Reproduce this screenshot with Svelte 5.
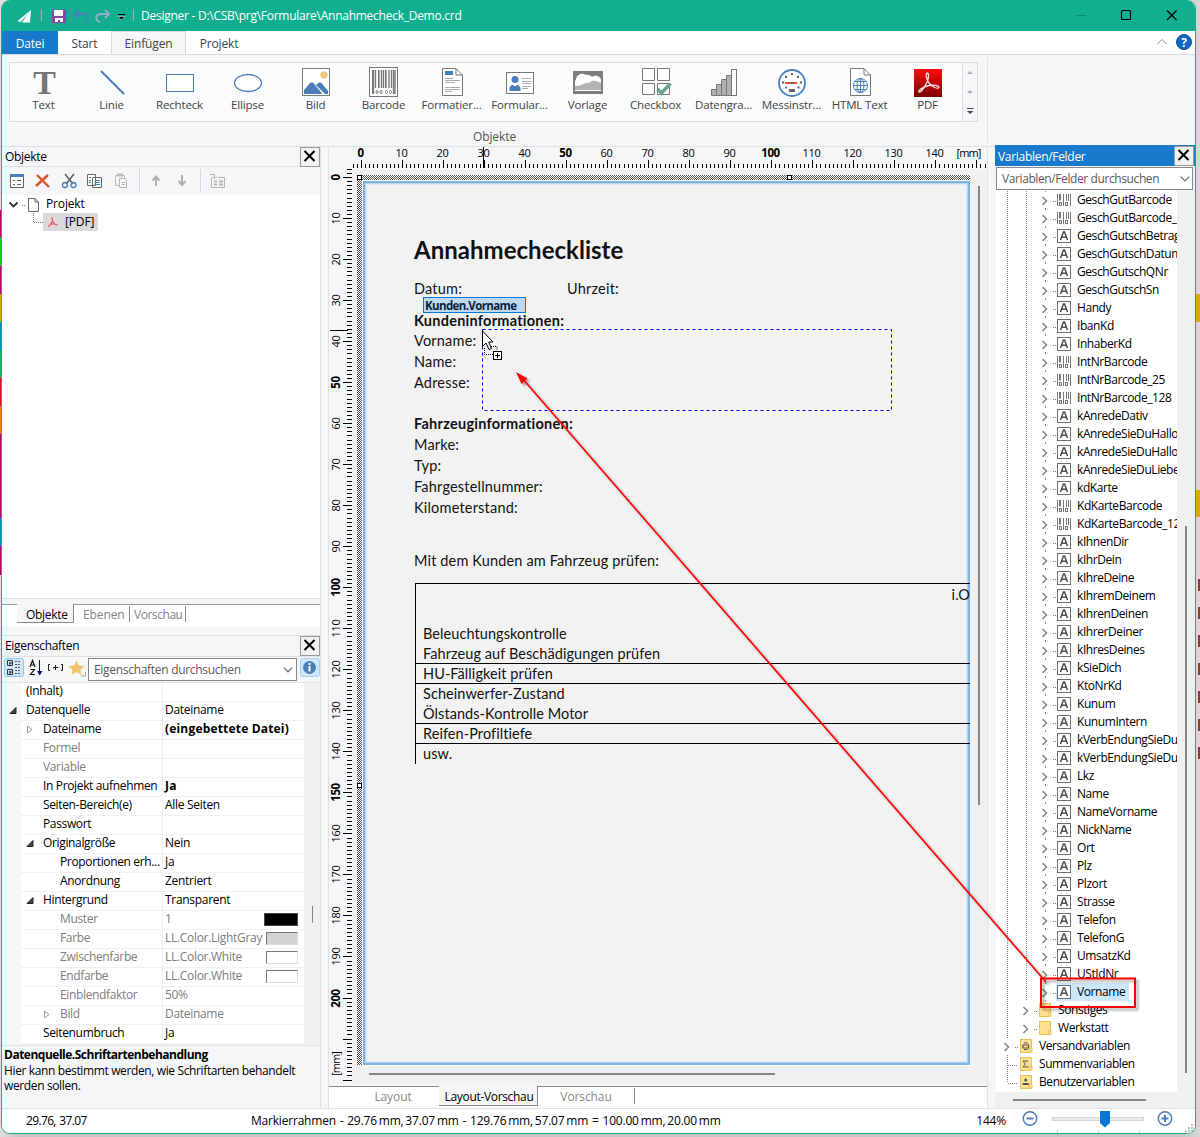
<script lang="ts">
  interface Prop {
    name: string
    value?: string
    level: number
    state?: 'open' | 'closed'
    dim?: boolean
    bold?: boolean
    swatch?: string
  }

  const MM = 4.1025

  const tools = [
    'Text',
    'Linie',
    'Rechteck',
    'Ellipse',
    'Bild',
    'Barcode',
    'Formatier...',
    'Formular...',
    'Vorlage',
    'Checkbox',
    'Datengra...',
    'Messinstr...',
    'HTML Text',
    'PDF',
  ]

  const props: Prop[] = [
    { name: '(Inhalt)', level: 0 },
    { name: 'Datenquelle', value: 'Dateiname', level: 0, state: 'open' },
    { name: 'Dateiname', value: '(eingebettete Datei)', level: 1, state: 'closed', bold: true },
    { name: 'Formel', level: 1, dim: true },
    { name: 'Variable', level: 1, dim: true },
    { name: 'In Projekt aufnehmen', value: 'Ja', level: 1, bold: true },
    { name: 'Seiten-Bereich(e)', value: 'Alle Seiten', level: 1 },
    { name: 'Passwort', level: 1 },
    { name: 'Originalgröße', value: 'Nein', level: 1, state: 'open' },
    { name: 'Proportionen erh...', value: 'Ja', level: 2 },
    { name: 'Anordnung', value: 'Zentriert', level: 2 },
    { name: 'Hintergrund', value: 'Transparent', level: 1, state: 'open' },
    { name: 'Muster', value: '1', level: 2, dim: true, swatch: '#000' },
    { name: 'Farbe', value: 'LL.Color.LightGray', level: 2, dim: true, swatch: '#d3d3d3' },
    { name: 'Zwischenfarbe', value: 'LL.Color.White', level: 2, dim: true, swatch: '#fff' },
    { name: 'Endfarbe', value: 'LL.Color.White', level: 2, dim: true, swatch: '#fff' },
    { name: 'Einblendfaktor', value: '50%', level: 2, dim: true },
    { name: 'Bild', value: 'Dateiname', level: 2, state: 'closed', dim: true },
    { name: 'Seitenumbruch', value: 'Ja', level: 1 },
  ]

  const fields = [
    'GeschGutBarcode',
    'GeschGutBarcode_',
    'GeschGutschBetrag',
    'GeschGutschDatum',
    'GeschGutschQNr',
    'GeschGutschSn',
    'Handy',
    'IbanKd',
    'InhaberKd',
    'IntNrBarcode',
    'IntNrBarcode_25',
    'IntNrBarcode_128',
    'kAnredeDativ',
    'kAnredeSieDuHallo',
    'kAnredeSieDuHallo',
    'kAnredeSieDuLiebe',
    'kdKarte',
    'KdKarteBarcode',
    'KdKarteBarcode_12',
    'kIhnenDir',
    'kIhrDein',
    'kIhreDeine',
    'kIhremDeinem',
    'kIhrenDeinen',
    'kIhrerDeiner',
    'kIhresDeines',
    'kSieDich',
    'KtoNrKd',
    'Kunum',
    'KunumIntern',
    'kVerbEndungSieDu',
    'kVerbEndungSieDu',
    'Lkz',
    'Name',
    'NameVorname',
    'NickName',
    'Ort',
    'Plz',
    'Plzort',
    'Strasse',
    'Telefon',
    'TelefonG',
    'UmsatzKd',
    'UStIdNr',
    'Vorname',
  ]

  const rows = [
    { text: 'Beleuchtungskontrolle' },
    { text: 'Fahrzeug auf Beschädigungen prüfen', line: true },
    { text: 'HU-Fälligkeit prüfen', line: true },
    { text: 'Scheinwerfer-Zustand' },
    { text: 'Ölstands-Kontrolle Motor', line: true },
    { text: 'Reifen-Profiltiefe', line: true },
    { text: 'usw.' },
  ]

  const hTicks = Array.from({ length: 155 }, (_, i) => i - 2)
  const vTicks = Array.from({ length: 223 }, (_, i) => i - 2)

  const hx = (mm: number) => Math.round(9 + mm * MM) + 0.5
  const vy = (mm: number) => Math.round(31 + mm * MM) + 0.5
</script>

{#snippet toolIcon(name: string)}
  <svg width="32" height="32" viewBox="0 0 32 32" fill="none">
    {#if name === 'Text'}
      <text x="16.500" y="28" class="t-glyph" text-anchor="middle" fill="#757575">T</text>
    {:else if name === 'Linie'}
      <path d="M5 5L28 28" stroke="#4a7ebb" stroke-width="2" />
    {:else if name === 'Rechteck'}
      <rect x="2.5" y="8.5" width="27" height="17" stroke="#4a7ebb" fill="#fff" />
    {:else if name === 'Ellipse'}
      <ellipse cx="16" cy="17" rx="13.5" ry="8.5" stroke="#4a7ebb" stroke-width="1.3" fill="#fff" />
    {:else if name === 'Bild'}
      <rect x="2.5" y="2.5" width="27" height="27" stroke="#7a7a7a" fill="#fff" />
      <circle cx="24" cy="9" r="3.7" fill="#efc87c" />
      <path d="M4 28V24L10.500 16.500L13 16.500L22.500 28ZM16 19L19 16.500H21L28 25V28H25Z" fill="#4a7ebb" />
    {:else if name === 'Barcode'}
      <rect x="1.5" y="1.5" width="28" height="29" stroke="#777" fill="#fff" />
      <path
        d="M5.500 4V28M7.500 4V22M11 4V22M13.500 4V22M15.500 4V22M18 4V22M21 4V22M23.500 4V22M25.500 4V28M27 4V28"
        stroke="#777"
        stroke-width="1.3"
      />
      <path d="M4.500 4V28M10.500 4V22M17.500 4V22" stroke="#777" />
      <rect x="8" y="24.500" width="2" height="3" rx="1" stroke="#777" />
      <rect x="12" y="24.500" width="2" height="3" rx="1" stroke="#777" />
      <rect x="17.500" y="24.500" width="2" height="3" rx="1" stroke="#777" />
      <rect x="21.500" y="24.500" width="2" height="3" rx="1" stroke="#777" />
    {:else if name === 'Formatier...'}
      <path d="M6.500 2.500H20L26.500 9V29.500H6.500Z" stroke="#777" fill="#fff" />
      <path d="M20 2.500V9H26.500" stroke="#777" />
      <rect x="9" y="5" width="8" height="4" fill="#4a7ebb" />
      <path d="M9 12.500H17M9 14.500H24M9 16.500H19M9 21.500H24M9 23.500H24M9 25.500H16" stroke="#aaa" />
    {:else if name === 'Formular...'}
      <rect x="2.500" y="6.500" width="27" height="21" stroke="#777" fill="#fff" />
      <circle cx="11" cy="13.500" r="3.500" fill="#4a7ebb" />
      <path d="M5.500 25V21.500L8 18.500L11 20.500L14 18.500L16.500 21.500V25Z" fill="#4a7ebb" />
      <path d="M18 12.500H27M18 15.500H27M18 17.500H27M18 20.500H27M18 22.500H24" stroke="#aaa" />
    {:else if name === 'Vorlage'}
      <rect x="1" y="5" width="30" height="23" fill="#7d7d7d" />
      <path d="M3 20V15C5 13 4 9 7 9C9 7 12 8 14 9C18 8 19 12 22 10C26 9 29 12 29 14V20Z" fill="#fff" />
      <path d="M3 20C9 21 12 16 17 17C20 13 25 15 29 17V24H3Z" fill="#b4b4b4" />
      <path d="M3 24.500H29" stroke="#fff" />
    {:else if name === 'Checkbox'}
      <path
        d="M2.500 2.500H14.500V14.500H2.500ZM17.500 2.500H29.500V14.500H17.500ZM2.500 17.500H14.500V28.500H2.500ZM17.500 17.500H29.500V28.500H17.500Z"
        stroke="#777"
        fill="#fff"
      />
      <path d="M17.500 23L21.500 27L30.500 17.500" stroke="#65a790" stroke-width="3.600" />
    {:else if name === 'Datengra...'}
      <path
        d="M3.500 23.500H8.500V29.500H3.500ZM8.500 18.500H13.500V29.500H8.500ZM13.500 13.500H18.500V29.500H13.500ZM18.500 9.500H23.500V29.500H18.500Z"
        fill="#b0b0b0"
        stroke="#777"
      />
      <rect x="23.500" y="3.500" width="5" height="26" stroke="#777" fill="#fff" />
    {:else if name === 'Messinstr...'}
      <circle cx="16" cy="17" r="13" stroke="#4a7ebb" stroke-width="1.800" fill="#fff" />
      <path
        d="M6 16.500H8M24 16.500H26M16 7V9M10 10V12M22 10V12M9 21.500H11M21.500 21.500H23.500"
        stroke="#666"
        stroke-width="2"
      />
      <path d="M9 17H21" stroke="#d9502e" stroke-width="2" />
      <rect x="15" y="16" width="2" height="2" fill="#666" />
      <rect x="13" y="23" width="6" height="3" fill="#666" />
    {:else if name === 'HTML Text'}
      <path d="M6.500 2.500H20L26.500 9V29.500H6.500Z" stroke="#777" fill="#fff" />
      <path d="M20 2.500V9H26.500" stroke="#777" />
      <circle cx="16.500" cy="19.500" r="7" stroke="#4a7ebb" />
      <ellipse cx="16.500" cy="19.500" rx="3.500" ry="7" stroke="#4a7ebb" />
      <path d="M16.500 12.500V26.500M9.500 19.500H23.500M10.500 15.500H22.500M10.500 23.500H22.500" stroke="#4a7ebb" />
    {:else}
      <defs>
        <linearGradient id="pdf" x1="0" y1="0" x2="0" y2="1">
          <stop offset="0" stop-color="#fb0d0d" />
          <stop offset="1" stop-color="#7c0000" />
        </linearGradient>
      </defs>
      <rect x="2" y="3" width="28" height="28" fill="url(#pdf)" />
      <path
        d="M15 7C17 7 17 11 15.500 15C13 21 9 26 7.500 26C5 26 9 21 17 19.500C22 18.500 27 19.500 27 21.500C26 23.500 20 21 17 17C15 14 13 8 15 7Z"
        stroke="#f8e0e0"
        stroke-width="1.300"
      />
    {/if}
  </svg>
{/snippet}

{#snippet fieldIcon(barcode: boolean)}
  {#if barcode}
    <svg class="ficon" width="14" height="14" viewBox="0 0 14 14" fill="none" stroke="#777">
      <path d="M.5 1V13M3 1V8M6.500 1V13M9.500 1V8M11.500 1V8M13.500 1V13" />
      <path d="M3 1V7" stroke-width="2" />
      <rect x="2.500" y="9.500" width="2" height="3" />
      <rect x="8.500" y="9.500" width="2" height="3" />
    </svg>
  {:else}
    <svg class="ficon" width="14" height="14" viewBox="0 0 14 14" fill="none">
      <rect x=".5" y=".5" width="13" height="13" fill="#fff" stroke="#707070" />
      <path d="M3.500 11L6.500 3H7.500L10.500 11M4.500 8.300H9.500" stroke="#505050" stroke-width="1.500" />
    </svg>
  {/if}
{/snippet}

{#snippet close()}
  <svg class="close" width="20" height="20" viewBox="0 0 20 20">
    <rect x=".5" y=".5" width="19" height="19" fill="#f2f2f2" stroke="#999" />
    <path d="M4.500 4L14.500 14M14.500 4L4.500 14" stroke="#000" stroke-width="2" />
  </svg>
{/snippet}

{#snippet chevron()}
  <svg class="chev" width="10" height="6" viewBox="0 0 10 6" fill="none">
    <path d="M.7.7L5 5L9.300.7" stroke="#666" stroke-width="1.100" />
  </svg>
{/snippet}

{#snippet folder(kind: string)}
  <svg class="folder" width="13" height="14" viewBox="0 0 13 14" fill="none">
    <rect x=".5" y=".5" width="11" height="13" fill="#fce18e" stroke="#e8c35a" />
    <path d="M9.500 13.500V9H12V13.500" fill="#fce18e" stroke="#e8c35a" />
    {#if kind === 'print'}
      <path d="M3 6H8.500V9H3ZM4 4H7.500M4 10.500H7.500" stroke="#555" stroke-width="1.200" />
    {:else if kind === 'sum'}
      <path d="M8 4.500V4H3L5.500 7L3 10H8V9.500" stroke="#555" />
    {:else if kind === 'user'}
      <circle cx="5.700" cy="5" r="1.500" fill="#555" />
      <path d="M2.700 10V8H8.700V10Z" fill="#555" />
    {/if}
  </svg>
{/snippet}

<div class="desktop">
  <div class="window">
    <header class="titlebar">
      <svg width="130" height="31" viewBox="0 0 130 31" fill="none">
        <path d="M29 10L15.500 21L18.500 22L25.500 14.500L20 22.500H28Z" fill="#fff" />
        <path d="M38.500 9V21" stroke="#5b9484" />
        <path d="M39.500 9V21" stroke="#6cc9b5" />
        <path d="M50 9.500H64V23H50Z" fill="#8a46a8" />
        <rect x="52" y="10" width="9" height="6" fill="#fff" />
        <path d="M53 18H61V22H58V20H56V22H53Z" fill="#fff" />
        <path d="M77 10L73 14L77 18M73 14H81C87 14 87 21 82 22" stroke="#4a7ec0" stroke-width="2" />
        <path d="M103 10L107 14L103 18M107 14H99C93 14 93 21 98 22" stroke="#94aed0" stroke-width="2" />
        <path d="M116 14.500H123" stroke="#000" />
        <path d="M116 16.500H123L119.500 20Z" fill="#000" stroke="#fff" stroke-width=".5" />
      </svg>
      <i></i>
      <span class="title">Designer - D:\CSB\prg\Formulare\Annahmecheck_Demo.crd</span>
      <svg class="controls" width="120" height="31" viewBox="0 0 120 31" fill="none" stroke="#000">
        <path d="M1 15.500H11" stroke="#0c8c72" />
        <rect x="46.500" y="10.500" width="9" height="9" rx="1" stroke-width="1.200" />
        <path d="M92 10.500L101.500 20M101.500 10.500L92 20" stroke-width="1.200" />
      </svg>
    </header>

    <nav class="menu">
      <span class="file">Datei</span>
      <span class="start">Start</span>
      <span class="insert">Einfügen</span>
      <span class="project">Projekt</span>
      <svg class="help" width="36" height="18" viewBox="0 0 36 18" fill="none">
        <path d="M1.500 11L6 6.500L10.500 11" stroke="#888" />
        <circle cx="28" cy="9" r="7.500" fill="#0a68c8" stroke="#2a4d78" />
        <text x="28" y="13.500" text-anchor="middle" class="q">?</text>
      </svg>
    </nav>

    <section class="ribbon">
      <div class="group">
        <div class="gallery">
          {#each tools as tool}
            <div class="tool">
              {@render toolIcon(tool)}
              <span>{tool}</span>
            </div>
          {/each}
          <svg class="pager" width="14" height="58" viewBox="0 0 14 58">
            <path d="M4 11H10L7 8ZM4 28H10L7 31Z" fill="#a9adb3" />
            <path d="M4 45.500H10.500" stroke="#444b5a" />
            <path d="M4 48H10.500L7.200 51Z" fill="#444b5a" />
          </svg>
        </div>
        <div class="caption">Objekte</div>
      </div>
    </section>

    <main>
      <aside class="left">
        <div class="phead"><span>Objekte</span>{@render close()}</div>
        <svg class="tools" width="318" height="28" viewBox="2 167 318 28" fill="none">
          <rect x="10.500" y="174.500" width="13" height="13" fill="#fff" stroke="#666" />
          <path d="M10 175.500H24" stroke="#4a7ebb" stroke-width="3" />
          <path d="M13 180.500H15M13 184.500H15M17 180.500H21M17 184.500H21" stroke="#666" />
          <path d="M37 175L49 187M48 175L36 186" stroke="#dd5230" stroke-width="2.400" />
          <path d="M65 174L73 184M74 174L66 184" stroke="#666" stroke-width="1.700" />
          <circle cx="65" cy="185" r="2.500" stroke="#4a7ebb" stroke-width="1.300" />
          <circle cx="73.500" cy="185" r="2.500" stroke="#4a7ebb" stroke-width="1.300" />
          <path d="M87.500 174.500H95.500V185.500H87.500ZM92.500 177.500H101.500V187.500H92.500Z" fill="#fff" stroke="#666" />
          <path d="M89 177.500H91M89 180.500H91M89 182.500H91M94.500 180.500H100M94.500 182.500H100M94.500 184.500H100" stroke="#4a7ebb" />
          <path d="M115.500 175.500H124.500V185.500H115.500Z" stroke="#bbb" />
          <path d="M117 175H123" stroke="#bbb" stroke-width="3" />
          <path d="M119.500 178.500H124.500L126.500 181V187.500H119.500ZM121.500 182.500H125M121.500 184.500H125" fill="#fafafa" stroke="#b5b5b5" />
          <path d="M139.500 169V192M200.500 169V192" stroke="#d5d8dc" />
          <path d="M156 186V177M152.500 180.500L156 176.500L159.500 180.500M182 175V184M178.500 181L182 185L185.500 181" stroke="#b0b0b0" stroke-width="2" />
          <path d="M211.500 178V187.500H224.500V177.500H218M210 174.500H214.500V178M212 176.500L214.500 179L217 176.500" stroke="#b5b5b5" />
          <path d="M214 181.500H217M219 181.500H223M214 184.500H217M219 184.500H223" stroke="#b5b5b5" stroke-width="2" />
        </svg>
        <div class="objects">
          <div class="node">
            <svg width="38" height="18" viewBox="0 0 38 18" fill="none">
              <path d="M7.500 7.500L11.500 11.500L15.500 7.500" stroke="#333" stroke-width="1.800" />
              <path d="M20 10.500H24" stroke="#777" stroke-dasharray="1 1" />
              <path d="M26.500 3.500H33L36.500 7V16.500H26.500ZM33 3.500V7H36.500" fill="#fff" stroke="#666" />
            </svg>
            <span>Projekt</span>
          </div>
          <div class="node child">
            <svg width="11" height="18" viewBox="0 0 11 18" fill="none">
              <path d="M.5 0V9.500H11" stroke="#777" stroke-dasharray="1 1" />
            </svg>
            <span class="picked">
              <svg width="12" height="14" viewBox="0 0 12 14" fill="none" stroke="#f05050">
                <path d="M5 2L5.500 6L1.500 12M5.500 6L8 9.500L11 10M3.500 9.500L8 8.500" stroke-width="1.200" />
              </svg>
              [PDF]
            </span>
          </div>
        </div>
        <div class="ltabs">
          <span class="active">Objekte</span>
          <span class="second">Ebenen</span>
          <span class="third">Vorschau</span>
        </div>

        <div class="phead props-head"><span>Eigenschaften</span>{@render close()}</div>
        <div class="ptools">
          <svg width="85" height="25" viewBox="2 657 85 25" fill="none">
            <rect x="4.500" y="658.500" width="19" height="18" rx="2" fill="#cfe6fb" stroke="#8fc4f0" />
            <path d="M7.500 660.500H12.500V665.500H7.500ZM7.500 669.500H12.500V674.500H7.500ZM9 663H12M10 662V665M9 672H12M10 671V674" stroke="#333" />
            <path d="M15 661.500H21M15 664.500H21M15 667.500H21M15 670.500H21M15 673.500H21" stroke="#555" stroke-dasharray="2 1" />
            <path d="M30 667L32.500 660.500L35 667M31 665H34M30.500 669.500H34.500L30.500 674.500H35" stroke="#111" stroke-width="1.200" />
            <path d="M39.500 660V672" stroke="#0a0a90" />
            <path d="M37 671H42.500L39.700 675.500Z" fill="#0a0a90" />
            <path d="M50 664.500H48.500V670.500H50M61 664.500H62.500V670.500H61M53 667.500H58.500M55.500 665V670" stroke="#222" />
            <path d="M76.500 660L79 665.500L84.500 666L80.300 670L81.800 675L76.500 672L71.500 675L72.500 670L68.500 666L74.500 665.500Z" fill="#f0c36c" />
            <path d="M81 676H85.500V672" stroke="#aaa" />
          </svg>
          <div class="combo"><span>Eigenschaften durchsuchen</span>{@render chevron()}</div>
          <svg class="info" width="20" height="20" viewBox="0 0 20 20">
            <rect x=".5" y=".5" width="19" height="18" rx="2" fill="#cfe6fb" stroke="#a7d0f5" />
            <circle cx="9.500" cy="9.500" r="6.500" fill="#4a7ebb" />
            <path d="M9.500 8V13.500M9.500 5V7" stroke="#fff" stroke-width="2" />
          </svg>
        </div>
        <div class="pgrid">
          <div class="plist">
            {#each props as p}
              <div class="prow" class:dim={p.dim}>
                <span class="pname level-{p.level}">
                  {#if p.state}
                    <svg class="tw" width="8" height="9" viewBox="0 0 8 9">
                      {#if p.state === 'open'}
                        <path d="M1 7.500H7V1.500Z" fill="#444" stroke="#222" />
                      {:else}
                        <path d="M1.500 1L6 4.500L1.500 8Z" fill="#fff" stroke="#999" />
                      {/if}
                    </svg>
                  {/if}
                  {p.name}
                </span>
                <span class="pvalue" class:bold={p.bold}>{p.value ?? ''}</span>
                {#if p.swatch}
                  <i class="swatch" class:wide={p.name === 'Muster'} style:background={p.swatch}></i>
                {/if}
              </div>
            {/each}
          </div>
          <div class="pscroll"><i></i></div>
        </div>
        <div class="hint">
          <b>Datenquelle.Schriftartenbehandlung</b>
          <p>Hier kann bestimmt werden, wie Schriftarten behandelt<br />werden sollen.</p>
        </div>
      </aside>

      <section class="editor">
        <div class="work">
          <svg class="rulers" width="658" height="937" viewBox="0 0 658 937">
            <rect x="23" y="23" width="634" height="914" fill="#f0f0f0" />
            <g transform="translate(23 0)" stroke="#000">
              {#each hTicks as t}
                <path d="M{hx(t)} {t % 10 === 0 ? 14 : 18}V22" />
              {/each}
              <path d="M131.500 1V22" />
            </g>
            <g stroke="#000">
              {#each vTicks.filter((t) => vy(t) < 935) as t}
                <path d="M{t % 10 === 0 ? 14 : 18} {vy(t)}H23" />
              {/each}
              <path d="M1 184.500H19" />
            </g>
            {#each [0, 10, 20, 30, 40, 50, 60, 70, 80, 90, 100, 110, 120, 130, 140] as n}
              <text x={hx(n) + 22} y="11" text-anchor="middle" class:major={n % 50 === 0}>{n}</text>
            {/each}
            <text x="639.500" y="11" text-anchor="middle" class="unit">[mm]</text>
            {#each [0, 10, 20, 30, 40, 50, 60, 70, 80, 90, 100, 110, 120, 130, 140, 150, 160, 170, 180, 190, 200] as n}
              <text transform="translate(11 {vy(n)}) rotate(-90)" text-anchor="middle" class:major={n % 50 === 0}>{n}</text>
            {/each}
            <text transform="translate(11 918) rotate(-90)" text-anchor="middle" class="unit">[mm]</text>
            <defs>
              <pattern id="hatch" width="2" height="2" patternUnits="userSpaceOnUse">
                <rect width="2" height="2" fill="#fff" />
                <rect width="1" height="1" fill="#555" />
                <rect x="1" y="1" width="1" height="1" fill="#555" />
              </pattern>
            </defs>
            <path d="M28 29H641V34H33V919H28Z" fill="url(#hatch)" />
            <path d="M33.500 919V34.500H641M34 919.500H641" stroke="#fff" fill="none" />
            <rect x="28.500" y="29.500" width="4" height="4" fill="#fff" stroke="#000" />
            <rect x="458.500" y="29.500" width="4" height="4" fill="#fff" stroke="#000" />
            <rect x="28.500" y="637.500" width="4" height="4" fill="#fff" stroke="#000" />
            <path d="M650 40V659" stroke="#858585" stroke-width="2" />
            <path d="M40 928H446" stroke="#858585" stroke-width="2" />
          </svg>
          <article class="paper">
            <h1>Annahmecheckliste</h1>
            <div class="when"><span>Datum:</span><span>Uhrzeit:</span></div>
            <h2>Kundeninformationen:</h2>
            <p>Vorname:</p>
            <p>Name:</p>
            <p>Adresse:</p>
            <h2 class="car">Fahrzeuginformationen:</h2>
            <p>Marke:</p>
            <p>Typ:</p>
            <p>Fahrgestellnummer:</p>
            <p>Kilometerstand:</p>
            <p class="intro">Mit dem Kunden am Fahrzeug prüfen:</p>
            <div class="check">
              <div class="chead">i.O</div>
              {#each rows as row}
                <div class="crow" class:line={row.line}>{row.text}</div>
              {/each}
            </div>
          </article>
        </div>
        <div class="etabs">
          <span class="layout">Layout</span>
          <span class="active">Layout-Vorschau</span>
          <span class="preview">Vorschau</span>
        </div>
      </section>

      <aside class="right">
        <div class="vhead"><span>Variablen/Felder</span>{@render close()}</div>
        <div class="combo"><span>Variablen/Felder durchsuchen</span>{@render chevron()}</div>
        <div class="vbody">
          <div class="tree">
            {#each fields as f}
              <div class="trow">
                <svg class="guides" width="60" height="18" viewBox="0 0 60 18" fill="none">
                  <path d="M11.500 0V18M30.500 0V18" stroke="#888" stroke-dasharray="1 1" />
                  <path d="M49.500 0V1M49.500 17V18" stroke="#888" />
                  <path d="M46.500 6L50.500 10L46.500 14" stroke="#888" stroke-width="1.600" />
                  <path d="M57 10.500H60" stroke="#777" stroke-dasharray="1 1" />
                </svg>
                <span class="entry" class:hot={f === 'Vorname'}>
                  {@render fieldIcon(f.includes('Barcode'))}
                  <span>{f}</span>
                </span>
              </div>
            {/each}
            {#each ['Sonstiges', 'Werkstatt'] as f}
              <div class="trow">
                <svg class="guides" width="43" height="18" viewBox="0 0 43 18" fill="none">
                  <path d="M11.500 0V18" stroke="#888" stroke-dasharray="1 1" />
                  <path d="M27.500 6L31.500 10L27.500 14" stroke="#888" stroke-width="1.600" />
                  <path d="M38 10.500H42" stroke="#777" stroke-dasharray="1 1" />
                </svg>
                {@render folder('plain')}
                <span class="ftext">{f}</span>
              </div>
            {/each}
            {#each [['Versandvariablen', 'print'], ['Summenvariablen', 'sum'], ['Benutzervariablen', 'user']] as [f, kind]}
              <div class="trow">
                <svg class="guides" width="24" height="18" viewBox="0 0 24 18" fill="none">
                  {#if kind === 'print'}
                    <path d="M11.500 0V1" stroke="#888" />
                    <path d="M8.500 6L12.500 10L8.500 14" stroke="#888" stroke-width="1.600" />
                    <path d="M19 10.500H22" stroke="#777" stroke-dasharray="1 1" />
                  {:else}
                    <path d="M11.500 0V{kind === 'sum' ? 18 : 10}M12 10.500H22" stroke="#888" stroke-dasharray="1 1" />
                  {/if}
                </svg>
                {@render folder(kind)}
                <span class="ftext">{f}</span>
              </div>
            {/each}
          </div>
          <div class="vscroll"><i></i></div>
        </div>
        <div class="hscroll"><i></i></div>
      </aside>
    </main>

    <footer>
      <span class="pos">29.76, 37.07</span>
      <span class="frame">Markierrahmen&nbsp; - &nbsp;29.76 mm, 37.07 mm&nbsp; - &nbsp;129.76 mm, 57.07 mm&nbsp; = &nbsp;100.00 mm, 20.00 mm</span>
      <span class="zoom">144%</span>
      <svg width="183" height="24" viewBox="0 0 183 24" fill="none">
        <circle cx="18" cy="9.500" r="6.700" stroke="#4a7ebb" stroke-width="1.500" />
        <path d="M14.500 9.500H21.500" stroke="#4a7ebb" stroke-width="2" />
        <rect x="40.500" y="8.500" width="91" height="3" fill="#e8eaea" stroke="#d4d6d6" />
        <path d="M88 2H98V14L93 18.500L88 14Z" fill="#0078d7" />
        <path d="M45.500 21V24M86.500 21V24M127.500 21V24" stroke="#ccc" />
        <circle cx="153" cy="9.500" r="6.700" stroke="#4a7ebb" stroke-width="1.500" />
        <path d="M149.500 9.500H156.500M153 6V13" stroke="#4a7ebb" stroke-width="2" />
        <path d="M180 15V24M177 18V24M174 21V24" stroke="#bbb" stroke-width="2" stroke-dasharray="2 1" />
      </svg>
    </footer>
  </div>

  <!-- drag in progress: ghost label, drop frame, pointer and the annotation arrow -->
  <div class="ghost">Kunden.Vorname</div>
  <svg class="overlay" width="1200" height="1137" viewBox="0 0 1200 1137" fill="none">
    <rect x="482.500" y="329.500" width="409" height="81" stroke="#0000e0" stroke-dasharray="3 3" />
    <path d="M482.500 331V346.500L486 343L489 349.500L491.500 348.500L488.700 342H493Z" fill="#fff" stroke="#000" />
    <path d="M484.500 348V354.500H493M491 346.500H497V350" stroke="#000" stroke-dasharray="1 1" />
    <rect x="493.500" y="351.500" width="8" height="8" fill="#fff" stroke="#000" />
    <path d="M495 355.500H500M497.500 353V358" stroke="#000" />
    <g filter="url(#drop)">
      <path d="M1046 982L522 378" stroke="#f00" stroke-width="1.600" />
      <path d="M516 372L527.500 378.500L521.500 384Z" fill="#f00" />
      <rect x="1041" y="978.500" width="94" height="28.500" stroke="#f00" stroke-width="2" />
    </g>
    <defs>
      <filter id="drop" filterUnits="userSpaceOnUse" x="500" y="360" width="660" height="660">
        <feDropShadow dx="2.500" dy="2.500" stdDeviation="1.200" flood-color="#000" flood-opacity=".35" />
      </filter>
    </defs>
  </svg>
</div>

<style>
  :global(body) {
    margin: 0;
    overflow: hidden;
  }

  .desktop {
    position: relative;
    width: 1200px;
    height: 1137px;
    background:
      linear-gradient(#b5006a, #b5006a) 0 210px / 2px 27px no-repeat,
      linear-gradient(#10d020, #10d020) 0 237px / 2px 29px no-repeat,
      linear-gradient(#b5006a, #b5006a) 0 266px / 2px 28px no-repeat,
      linear-gradient(#c8b400, #c8b400) 0 294px / 2px 28px no-repeat,
      linear-gradient(#0a84d0, #0a84d0) 0 322px / 2px 28px no-repeat,
      linear-gradient(#20b040, #20b040) 0 350px / 2px 28px no-repeat,
      linear-gradient(#e01010, #e01010) 0 378px / 2px 28px no-repeat,
      linear-gradient(#e88020, #e88020) 0 406px / 2px 28px no-repeat,
      linear-gradient(#0a84d0, #0a84d0) 0 518px / 2px 28px no-repeat,
      linear-gradient(#b5006a, #b5006a) 0 434px / 2px 141px no-repeat,
      linear-gradient(#c8b400, #c8b400) 1196px 294px / 4px 28px no-repeat,
      linear-gradient(#c8b400, #c8b400) 1196px 490px / 4px 27px no-repeat,
      linear-gradient(#7a4a20, #7a4a20) 1198px 579px / 2px 12px no-repeat,
      linear-gradient(#7a4a20, #7a4a20) 1198px 607px / 2px 12px no-repeat,
      linear-gradient(#7a4a20, #7a4a20) 1198px 635px / 2px 12px no-repeat,
      linear-gradient(#7a4a20, #7a4a20) 1198px 663px / 2px 12px no-repeat,
      linear-gradient(#7a4a20, #7a4a20) 1198px 691px / 2px 12px no-repeat,
      linear-gradient(#7a4a20, #7a4a20) 1198px 719px / 2px 12px no-repeat,
      linear-gradient(#7a4a20, #7a4a20) 1198px 747px / 2px 12px no-repeat,
      linear-gradient(90deg, #e0e0e0, #c4c4c4 20px, #c4c4c4 1180px, #d8d8d8);
    font: 12px/18px 'Open Sans', sans-serif;
    letter-spacing: -0.3px;
    color: #000;
  }

  .window {
    box-sizing: border-box;
    width: 1195px;
    height: 1134px;
    margin-left: 1px;
    border: 1px solid #20a78c;
    border-top: 0;
    border-radius: 9px;
    overflow: hidden;
    background: #f5f6f8;
    display: flex;
    flex-direction: column;
    position: absolute;
  }

  svg {
    display: block;
    flex-shrink: 0;
  }

  span {
    white-space: nowrap;
  }

  .titlebar {
    height: 31px;
    flex-shrink: 0;
    background: #11af8f;
    display: flex;
    align-items: center;
    color: #fff;
  }
  .titlebar i {
    width: 1px;
    height: 12px;
    margin: 0 0 1px 0;
    background: #5b9484;
    border-right: 1px solid #6cc9b5;
  }
  .title {
    margin-left: 7px;
    letter-spacing: -0.26px;
  }
  .controls {
    margin-left: auto;
  }

  .menu {
    height: 24px;
    flex-shrink: 0;
    box-sizing: border-box;
    background: #fff;
    border-bottom: 1px solid #d9dbde;
    display: flex;
    color: #444;
    line-height: 25px;
    text-align: center;
    letter-spacing: -0.15px;
  }
  .file {
    width: 56px;
    height: 23px;
    background: #1979ca;
    color: #fff;
  }
  .start {
    width: 53px;
  }
  .insert {
    width: 73px;
    background: #f5f6f8;
    border: 1px solid #d9dbde;
    border-width: 1px 1px 0;
    line-height: 23px;
  }
  .project {
    width: 66px;
  }
  .help {
    margin: 2px 3px 0 auto;
  }
  .q {
    font: bold 12px 'Open Sans', sans-serif;
    fill: #fff;
  }

  .ribbon {
    height: 92px;
    flex-shrink: 0;
    border-bottom: 1px solid #dfe1e4;
    box-sizing: border-box;
  }
  .group {
    width: 986px;
    height: 86px;
    margin-top: 2px;
    border-right: 1px solid #dfe1e4;
    padding: 5px 0 0 7px;
    box-sizing: border-box;
  }
  .gallery {
    width: 967px;
    height: 58px;
    border: 1px solid #d9dbde;
    background: #fafbfd;
    display: flex;
  }
  .tool {
    width: 68px;
    padding-top: 3px;
    display: flex;
    flex-direction: column;
    align-items: center;
    color: #444;
    letter-spacing: -0.15px;
    line-height: 14px;
    font-size: 11.5px;
  }
  .tool span {
    margin-right: 1px;
  }
  .pager {
    border-left: 1px solid #d9dbde;
    background: #f5f6f8;
  }
  .t-glyph {
    font: bold 34px 'Liberation Serif', serif;
  }
  .caption {
    width: 971px;
    margin-top: 7px;
    text-align: center;
    line-height: 16px;
    color: #555;
    letter-spacing: -0.1px;
  }

  main {
    display: flex;
    flex-shrink: 0;
    height: 961px;
    border-bottom: 1px solid #dfe1e4;
  }

  .left {
    width: 318px;
    border-right: 1px solid #dcdee1;
  }
  .phead {
    height: 19px;
    border-bottom: 1px solid #dfe1e4;
    display: flex;
    justify-content: space-between;
    line-height: 20px;
    padding-left: 3px;
  }
  .objects {
    height: 404px;
    background: #fff;
    border-bottom: 1px solid #dfe1e4;
    box-sizing: border-box;
  }
  .node {
    display: flex;
    height: 18px;
    line-height: 18px;
    letter-spacing: -0.15px;
  }
  .node > span {
    margin-left: 6px;
  }
  .child {
    padding-left: 31px;
  }
  .child > .picked {
    display: flex;
    align-items: center;
    gap: 6px;
    margin-left: -1px;
    padding: 0 4px;
    background: #dadada;
  }
  .ltabs {
    margin-top: 5px;
    height: 22px;
    background: #fff;
    border-top: 1px solid #999;
    display: flex;
    color: #848484;
  }
  .ltabs span {
    box-sizing: border-box;
    height: 16px;
    margin-top: 1px;
    padding: 0 3px 0 4px;
    border-right: 1px solid #888;
    line-height: 18px;
  }
  .ltabs .second {
    width: 56px;
    padding: 0 0 0 9px;
    letter-spacing: -0.1px;
  }
  .ltabs .third {
    width: 56px;
    letter-spacing: -0.45px;
  }
  .ltabs .active {
    width: 57px;
    height: 19px;
    margin: -1px 0 0 15px;
    padding: 0 0 0 9px;
    background: #f5f6f8;
    border-bottom: 1px solid #888;
    line-height: 21px;
    color: #000;
  }
  .props-head {
    margin-top: 8px;
    border-top: 1px solid #dfe1e4;
    height: 20px;
  }
  .ptools {
    height: 25px;
    border-bottom: 1px solid #e3e5e8;
    display: flex;
  }
  .combo {
    box-sizing: border-box;
    height: 24px;
    border: 1px solid #888;
    background: #fff;
    display: flex;
    align-items: center;
    justify-content: space-between;
    padding: 0 3px 0 5px;
    color: #5a5a5a;
  }
  .ptools .combo {
    width: 209px;
    height: 23px;
    margin: 1px 0 0 1px;
  }
  .info {
    margin: 1px 0 0 3px;
  }
  .pgrid {
    display: flex;
    height: 361px;
  }
  .plist {
    width: 302px;
    background: #fff;
  }
  .prow {
    height: 19px;
    display: flex;
    align-items: center;
    background: linear-gradient(#f0f1f3, #f0f1f3) 0 100% / 100% 1px no-repeat;
    line-height: 16px;
  }
  .prow.dim {
    color: #7c7c7c;
  }
  .pname {
    box-sizing: border-box;
    width: 161px;
    height: 19px;
    overflow: hidden;
    border-right: 1px solid #eceef0;
    background: linear-gradient(#f5f6f8, #f5f6f8) 0 0 / 19px 100% no-repeat;
    padding-left: 24px;
    position: relative;
    letter-spacing: -0.35px;
  }
  .tw {
    position: absolute;
    left: 7px;
    top: 4px;
  }
  .level-1 {
    padding-left: 41px;
  }
  .level-1 .tw {
    left: 24px;
  }
  .level-2 {
    padding-left: 58px;
  }
  .level-2 .tw {
    left: 41px;
  }
  .pvalue {
    align-self: flex-start;
    padding-left: 2px;
    flex: 1;
  }
  .bold {
    font-weight: bold;
    letter-spacing: 0.18px;
  }
  .swatch {
    box-sizing: border-box;
    width: 32px;
    height: 13px;
    margin-right: 6px;
    margin-bottom: 2px;
    border: 1px solid #ddd;
    border-top-color: #777;
    border-left-color: #777;
  }
  .swatch.wide {
    width: 34px;
    border-color: #444;
  }
  .pscroll {
    flex: 1;
    background: #f0f0f0;
  }
  .pscroll i {
    display: block;
    width: 1px;
    height: 17px;
    margin: 223px 0 0 8px;
    background: #858585;
  }
  .hint {
    border-top: 1px solid #dfe1e4;
    padding: 1px 2px;
    line-height: 15px;
    margin-top: 1px;
  }
  .hint b {
    display: block;
    line-height: 16px;
    letter-spacing: -0.5px;
  }
  .hint p {
    margin: 0;
    white-space: nowrap;
    letter-spacing: -0.37px;
  }

  .editor {
    width: 658px;
    margin-left: 7px;
    border: 1px solid #dfe1e4;
    border-width: 0 1px;
    margin-top: 0;
  }
  .work {
    position: relative;
    height: 936px;
    padding: 34px 0 0 34px;
    box-sizing: border-box;
  }
  .rulers {
    position: absolute;
    left: 0;
    top: -1px;
  }
  .rulers text {
    font-size: 11px;
    letter-spacing: -0.35px;
  }
  .rulers text.major {
    font-weight: bold;
    font-size: 11.5px;
  }
  .rulers text.unit {
    letter-spacing: -0.9px;
  }
  .paper {
    position: relative;
    box-sizing: border-box;
    width: 607px;
    height: 884px;
    background: #f2f2f2;
    box-shadow:
      inset 0 0 0 2px #7db5e6,
      inset 0 0 0 3px #b3d3ef,
      inset 0 0 0 4px #dbe8f4;
    padding: 53px 0 0 51px;
    font: 14.5px/21px 'Lato', sans-serif;
    letter-spacing: 0.2px;
    color: #111;
  }
  .paper h1 {
    margin: 0;
    font-size: 24px;
    line-height: 32px;
    letter-spacing: 0.02px;
  }
  .paper h2 {
    margin: 11px 0 0;
    font-size: 14.5px;
    line-height: 21px;
    letter-spacing: 0.25px;
  }
  .paper p {
    margin: 0;
    line-height: 20.8px;
  }
  .paper h2.car {
    margin: 20px 0 1px;
  }
  .paper .intro {
    margin-top: 32px;
    letter-spacing: 0.15px;
  }
  .when {
    margin-top: 12px;
    display: flex;
  }
  .when span:first-child {
    width: 153px;
  }
  .check {
    margin: 12px 0 0 1px;
    border: 1px solid #000;
    border-width: 1px 0 0 1px;
    line-height: 19px;
    letter-spacing: 0.07px;
  }
  .chead {
    height: 39px;
    padding-top: 1px;
    text-align: right;
  }
  .crow {
    box-sizing: border-box;
    height: 20px;
    padding-left: 7px;
    border-bottom: 1px solid transparent;
  }
  .crow.line {
    border-bottom-color: #000;
  }

  .etabs {
    height: 21px;
    margin-top: 3px;
    background: #fff;
    border-top: 1px solid #888;
    display: flex;
    color: #888;
    text-align: center;
    line-height: 19px;
    letter-spacing: -0.1px;
  }
  .etabs .layout {
    width: 110px;
    text-indent: 18px;
  }
  .etabs .active {
    width: 98px;
    height: 19px;
    margin-top: -1px;
    background: #f5f6f8;
    border: 1px solid #888;
    border-width: 0 1px 1px 0;
    line-height: 21px;
    text-indent: 2px;
    letter-spacing: -0.33px;
    color: #000;
  }
  .etabs .preview {
    width: 96px;
    height: 16px;
    margin-top: 1px;
    border-right: 1px solid #888;
    line-height: 17px;
  }

  .right {
    width: 200px;
    margin-left: 7px;
    display: flex;
    flex-direction: column;
  }
  .vhead {
    height: 21px;
    margin-top: -2px;
    background: #1979ca;
    color: #fff;
    display: flex;
    justify-content: space-between;
    padding: 0 1px 0 3px;
    line-height: 24px;
    letter-spacing: -0.3px;
  }
  .vhead .close {
    margin-top: 1px;
  }
  .right .combo {
    margin: 1px 2px 0 1px;
    height: 23px;
    padding-right: 2px;
    line-height: 20px;
    letter-spacing: -0.4px;
  }
  .vbody {
    display: flex;
    height: 902px;
  }
  .tree {
    box-sizing: border-box;
    width: 181px;
    margin-left: 1px;
    padding-top: 1px;
    background: #fff;
    overflow: hidden;
    letter-spacing: -0.42px;
  }
  .trow {
    height: 18px;
    display: flex;
    align-items: center;
  }
  .entry {
    display: flex;
    align-items: center;
    height: 18px;
    padding: 0 4px 0 1px;
  }
  .entry > span {
    margin-left: 6px;
  }
  .entry.hot {
    background: #cce8ff;
  }
  .ftext {
    margin-left: 6px;
  }
  .vscroll {
    flex: 1;
    background: #f0f0f0;
  }
  .vscroll i {
    display: block;
    width: 2px;
    height: 547px;
    margin: 336px 0 0 8px;
    background: #858585;
  }
  .hscroll {
    flex: 1;
    background: #f0f0f0;
  }
  .hscroll i {
    display: block;
    width: 133px;
    height: 2px;
    margin: 7px 0 0 18px;
    background: #858585;
  }

  footer {
    flex: 1;
    background: #fff;
    display: flex;
    line-height: 24px;
    letter-spacing: -0.2px;
  }
  .pos {
    width: 225px;
    padding-left: 24px;
    letter-spacing: -0.65px;
    word-spacing: 1px;
  }
  .frame {
    flex: 1;
    word-spacing: -1px;
  }
  .zoom {
    margin-right: 6px;
  }

  .ghost {
    position: absolute;
    left: 423px;
    top: 297px;
    width: 101px;
    height: 14px;
    border: 1px solid #0078d7;
    background: #c0d8ee;
    font-size: 11.5px;
    font-weight: bold;
    line-height: 16px;
    text-indent: 1px;
    letter-spacing: -0.62px;
    color: #06243f;
  }
  .overlay {
    position: absolute;
    left: 0;
    top: 0;
  }
</style>
